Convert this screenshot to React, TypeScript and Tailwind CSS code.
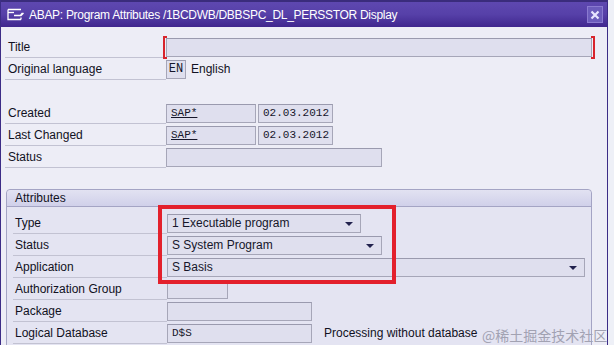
import type { ReactNode } from 'react'

const sans = { fontFamily: '"Liberation Sans", Arial, sans-serif' }
const mono = { fontFamily: '"Liberation Mono", "Courier New", monospace' }

const Field = ({
  width,
  children,
  className = '',
}: {
  width: string
  children?: ReactNode
  className?: string
}) => (
  <div
    className={`flex h-[19px] items-center border border-[#a6a6b8] border-t-[#9a9aae] bg-[#dfdfee] px-[4px] text-[12px] text-[#16162a] ${width} ${className}`}
  >
    {children}
  </div>
)

const Dropdown = ({ width, value }: { width: string; value: string }) => (
  <Field width={width} className="relative">
    <span>{value}</span>
    <span className="absolute top-[7px] right-[7px] h-0 w-0 border-x-[4px] border-t-[4px] border-x-transparent border-t-[#22224e]" />
  </Field>
)

const Row = ({
  label,
  inset = false,
  children,
}: {
  label?: string
  inset?: boolean
  children?: ReactNode
}) => (
  <div className="flex h-[22px] items-center">
    <div
      className={`flex h-full items-center border-b border-[#c2c2d2] text-[12px] text-[#111122] ${
        inset ? 'ml-[6px] w-[154px] pl-[2px]' : 'ml-[4px] w-[161px] pl-[3px]'
      }`}
    >
      {label}
    </div>
    <div className="flex items-center gap-[2px]">{children}</div>
  </div>
)

const TitleIcon = () => (
  <svg width="17" height="13" viewBox="0 0 17 13" fill="none" stroke="white" strokeWidth="1.3">
    <path d="M1 1.5h13M1 1.5v10h13" />
    <path d="M1 4.5h6" />
    <path d="M7 7.5h7l2.5-2.5M14 7.5v-1l1.5-1.5" />
    <path d="M14 11.5V9.5" />
  </svg>
)

export default function App() {
  return (
    <div
      className="relative h-[345px] w-[614px] overflow-hidden bg-[#eef0f7]"
      style={sans}
    >
      <div className="h-full w-[608px] border-x border-[#3c2c86] bg-[#ededf6]">
        {/* title bar */}
        <div className="flex h-[27px] items-center border-t-2 border-[#3a2c7c] bg-gradient-to-b from-[#5e48b0] via-[#5640a8] to-[#40268e] pr-[4px] pl-[6px]">
          <TitleIcon />
          <span className="ml-[5px] text-[12px] tracking-[-0.3px] text-white">
            ABAP: Program Attributes /1BCDWB/DBBSPC_DL_PERSSTOR Display
          </span>
          <div className="ml-auto flex h-[17px] w-[16px] items-center justify-center border border-[#8a7ad0] bg-[#6c5cbc]">
            <svg width="10" height="10" viewBox="0 0 10 10" stroke="#e8e4ff" strokeWidth="2.2">
              <path d="M1.5 1.5l7 7M8.5 1.5l-7 7" />
            </svg>
          </div>
        </div>

        <div className="pt-[9px]">
          <Row label="Title">
            <div className="relative">
              <span className="absolute top-[-2px] left-[-3px] h-[23px] w-[4px] border-y-2 border-l-2 border-[#d8242c]" />
              <Field width="w-[426px]" />
              <span className="absolute top-[-2px] right-[-3px] h-[23px] w-[4px] border-y-2 border-r-2 border-[#d8242c]" />
            </div>
          </Row>
          <Row label="Original language">
            <Field width="w-[20px]" className="justify-center !px-0 text-[11px]">
              <span style={mono}>EN</span>
            </Field>
            <span className="ml-[3px] text-[12px] text-[#111122]">English</span>
          </Row>
          <div className="h-[22px]" />
          <Row label="Created">
            <Field width="w-[90px]">
              <span style={mono} className="text-[11px] underline">SAP*</span>
            </Field>
            <Field width="w-[75px]">
              <span style={mono} className="text-[11px]">02.03.2012</span>
            </Field>
          </Row>
          <Row label="Last Changed">
            <Field width="w-[90px]">
              <span style={mono} className="text-[11px] underline">SAP*</span>
            </Field>
            <Field width="w-[75px]">
              <span style={mono} className="text-[11px]">02.03.2012</span>
            </Field>
          </Row>
          <Row label="Status">
            <Field width="w-[216px]" />
          </Row>

          {/* Attributes group */}
          <div className="mt-[21px] ml-[5px] w-[586px] rounded-t-[4px] border border-[#a4a4c4] bg-[#e4e4f2]">
            <div className="flex h-[17px] items-center rounded-t-[4px] border-b border-[#a4a4c4] bg-gradient-to-b from-[#e2e2f2] to-[#d0d0ea] pl-[8px] text-[12px] text-[#111122]">
              Attributes
            </div>
            <div className="pt-[5px]">
              <Row label="Type" inset>
                <Dropdown width="w-[194px]" value="1 Executable program" />
              </Row>
              <Row label="Status" inset>
                <Dropdown width="w-[215px]" value="S System Program" />
              </Row>
              <Row label="Application" inset>
                <Dropdown width="w-[418px]" value="S Basis" />
              </Row>
              <Row label="Authorization Group" inset>
                <Field width="w-[61px]" />
              </Row>
              <Row label="Package" inset>
                <Field width="w-[145px]" />
              </Row>
              <Row label="Logical Database" inset>
                <Field width="w-[145px]">
                  <span style={mono} className="text-[11px]">D$S</span>
                </Field>
                <span className="ml-[10px] text-[12px] text-[#111122]">
                  Processing without database
                </span>
              </Row>
              <Row inset>
                <Field width="w-[25px]" />
              </Row>
            </div>
          </div>
        </div>
      </div>

      {/* red highlight annotation */}
      <div className="pointer-events-none absolute top-[205px] left-[158px] h-[79px] w-[238px] border-4 border-[#e3202c]" />

      {/* watermark */}
      <span
        className="pointer-events-none absolute top-[325px] left-[482px] text-[14px] text-[#a2a2b2]"
        style={{ fontFamily: '"Noto Sans CJK SC", sans-serif' }}
      >
        @稀土掘金技术社区
      </span>
    </div>
  )
}
